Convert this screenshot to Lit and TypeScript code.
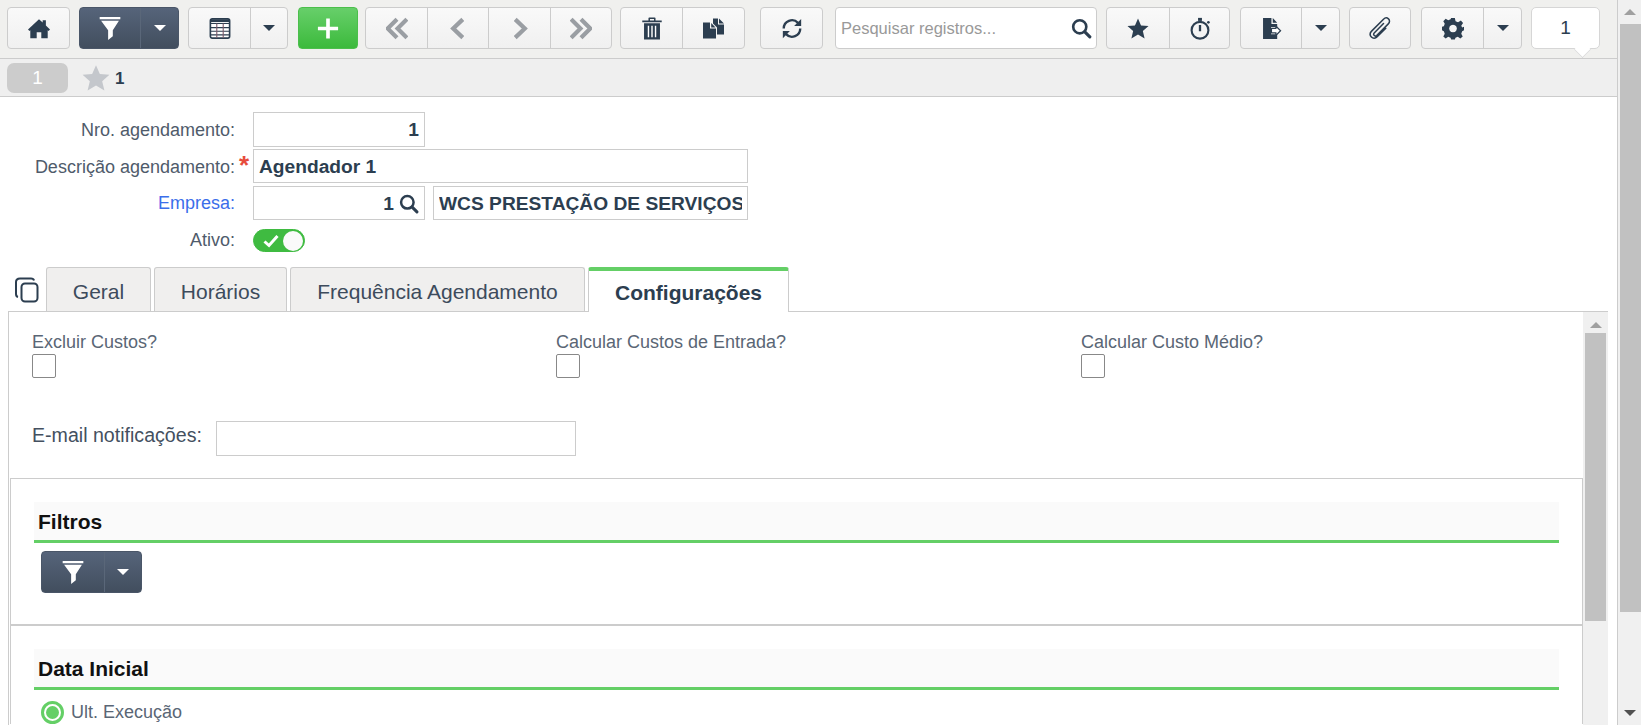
import { LitElement, html, css, svg } from "lit";
import { customElement } from "lit/decorators.js";

const DK = "#2c3e50";
const GR = "#9a9ea3";
const icons: Record<string, any> = {
  home: svg`<svg viewBox="0 0 24 24"><path fill="${DK}" d="M12 2 L16 5.5 V3 H19.5 V8.6 L24 13 L22.4 14.8 L21.5 14 V22.5 H14.5 V16 H9.5 V22.5 H2.5 V14 L1.6 14.8 L0 13 Z"/></svg>`,
  filter: svg`<svg viewBox="1 1 22 24.5"><path fill="#fff" d="M1 1 H23 V3.4 H1 Z M2.5 5 H21.5 L15 15 V21.5 L10 25.5 V15 Z"/></svg>`,
  table: svg`<svg viewBox="0 0 24 24"><rect x="1.5" y="1.5" width="21" height="21" rx="2" fill="#fff" stroke="${DK}" stroke-width="1.8"/><path stroke="${DK}" stroke-width="1.2" fill="none" d="M2 6.5 H22 M2 11 H22 M2 15 H22 M2 19 H22"/><path stroke="#7b5a6a" stroke-width="1.2" fill="none" d="M8.5 6.5 V22 M15.5 6.5 V22"/><rect x="2" y="2" width="20" height="3" fill="${DK}"/></svg>`,
  plus: svg`<svg viewBox="0 0 24 24"><path fill="#fff" d="M10 1 H14 V10 H23 V14 H14 V23 H10 V14 H1 V10 H10 Z"/></svg>`,
  dl: svg`<svg viewBox="2 1.5 20 21"><path fill="none" stroke="${GR}" stroke-width="3.8" d="M12 3.5 L3.5 12 L12 20.5 M21 3.5 L12.5 12 L21 20.5"/></svg>`,
  l: svg`<svg viewBox="4 0 16 24"><path fill="none" stroke="${GR}" stroke-width="4.4" d="M17 2.5 L7 12 L17 21.5"/></svg>`,
  r: svg`<svg viewBox="4 0 16 24"><path fill="none" stroke="${GR}" stroke-width="4.4" d="M7 2.5 L17 12 L7 21.5"/></svg>`,
  dr: svg`<svg viewBox="2 1.5 20 21"><path fill="none" stroke="${GR}" stroke-width="3.8" d="M3 3.5 L11.5 12 L3 20.5 M12 3.5 L20.5 12 L12 20.5"/></svg>`,
  trash: svg`<svg viewBox="0 0 24 26"><path fill="${DK}" d="M8 4 V1.5 Q8 .5 9 .5 H15 Q16 .5 16 1.5 V4 H23 V6 H1 V4 Z M9.7 4 H14.3 V2.2 H9.7 Z M3 7 H21 V25.5 H3 Z"/><path stroke="#fff" stroke-width="1.6" d="M8 10 V23 M12 10 V23 M16 10 V23"/></svg>`,
  copy: svg`<svg viewBox="0 0 22 20"><path fill="${DK}" d="M10 0 H15 V6 H21 V16 H14 V9 L10 5 Z M16 0 L21 5 H16 Z M0 4 H7 V10 H13 V20 H0 Z M8.2 4.5 L12.5 9 H8.2 Z"/></svg>`,
  refresh: svg`<svg viewBox="0 0 24 24"><path fill="none" stroke="${DK}" stroke-width="2.6" d="M3 12 A9 9 0 0 1 18.5 5.8 M21 12 A9 9 0 0 1 5.5 18.2"/><path fill="${DK}" d="M22 1.5 V9.2 H14.3 Z M2 22.5 V14.8 H9.7 Z"/></svg>`,
  search: svg`<svg viewBox="0 0 24 24"><circle cx="10" cy="10" r="7.5" fill="none" stroke="${DK}" stroke-width="3"/><path stroke="${DK}" stroke-width="3.6" stroke-linecap="round" d="M15.8 15.8 L21.5 21.5"/></svg>`,
  star: svg`<svg viewBox="0 0 24 24"><path fill="${DK}" d="M12 1 L15.3 8.6 L23.5 9.3 L17.3 14.7 L19.2 22.8 L12 18.5 L4.8 22.8 L6.7 14.7 L.5 9.3 L8.7 8.6 Z"/></svg>`,
  watch: svg`<svg viewBox="0 0 24 26"><circle cx="12" cy="15" r="9.5" fill="none" stroke="${DK}" stroke-width="2.4"/><rect x="9.8" y="1" width="4.4" height="3.4" fill="${DK}"/><circle cx="21.5" cy="6" r="1.5" fill="${DK}"/><path stroke="${DK}" stroke-width="2.6" d="M12 9 V16"/></svg>`,
  export: svg`<svg viewBox="0 0 24 26"><path fill="${DK}" d="M3 1 H12.5 V8 H19 V11.5 H12 V19.5 H19 V25 H3 Z M14 1 L19 6.5 H14 Z"/><path fill="#fff" stroke="${DK}" stroke-width="1.4" d="M12.5 13 H17.5 V10.2 L22.8 15.5 L17.5 20.8 V18 H12.5 Z"/></svg>`,
  clip: svg`<svg viewBox="1 .5 22 23"><path fill="none" stroke="${DK}" stroke-width="1.5" stroke-linecap="round" d="M15.5 7 L6.2 16.6 C4.6 18.3 7 20.6 8.7 19 L20.3 7.4 C23.8 3.8 18.9 -.8 15.5 2.7 L3.6 14.6 C-.3 18.6 5.1 24.3 9.2 20.3 L17.8 11.7"/></svg>`,
  gear: svg`<svg viewBox="0 0 24 24"><path fill="${DK}" fill-rule="evenodd" d="M10 .5 H14 L14.8 4 L17.5 5.1 L20.6 3.3 L23 6 L21 9 L22 11 L24 10 V14 L22 15 L21 17.6 L22.6 20.6 L20 23 L17.2 21 L14.7 22 L14 24 H10 L9.3 22 L6.8 21 L4 23 L1.4 20.6 L3 17.6 L2 15 L0 14 V10 L2 9.5 L3 6.8 L1.4 4 L4 1.4 L6.8 3 L9.3 2 Z M12 7.8 A4.2 4.2 0 1 0 12.01 7.8 Z"/></svg>`,
};

type Seg = { w: number; icon?: string; caret?: boolean };
type Group = { gap: number; kind?: string; segs: Seg[] };
const groups: Group[] = [
  { gap: 7, segs: [{ w: 63, icon: "home" }] },
  { gap: 9, kind: "dark", segs: [{ w: 61, icon: "filter" }, { w: 39, caret: true }] },
  { gap: 9, segs: [{ w: 62, icon: "table" }, { w: 38, caret: true }] },
  { gap: 10, kind: "green", segs: [{ w: 60, icon: "plus" }] },
  { gap: 7, segs: [{ w: 62, icon: "dl" }, { w: 61, icon: "l" }, { w: 62, icon: "r" }, { w: 62, icon: "dr" }] },
  { gap: 8, segs: [{ w: 62, icon: "trash" }, { w: 63, icon: "copy" }] },
  { gap: 15, segs: [{ w: 63, icon: "refresh" }] },
];
const groups2: Group[] = [
  { gap: 9, segs: [{ w: 63, icon: "star" }, { w: 61, icon: "watch" }] },
  { gap: 10, segs: [{ w: 61, icon: "export" }, { w: 39, caret: true }] },
  { gap: 9, segs: [{ w: 62, icon: "clip" }] },
  { gap: 10, segs: [{ w: 62, icon: "gear" }, { w: 39, caret: true }] },
];

@customElement("app-root")
export class AppRoot extends LitElement {
  static styles = css`
    :host { display: flex; width: 1641px; height: 725px; overflow: hidden; background: #fff;
      font-family: "Liberation Sans", Arial, sans-serif; color: #2c3e50; font-size: 16px; }
    .page { width: 1617px; flex: none; display: flex; flex-direction: column; min-width: 0; }
    .pagebar { width: 24px; flex: none; box-sizing: border-box; border-left: 1px solid #ccc; background: #f0f0f0;
      display: flex; flex-direction: column; align-items: flex-end; position: relative; }
    .arrow-up { width: 0; height: 0; border: 6px solid transparent; border-top: 0; border-bottom: 6px solid #a0a0a0; }
    .arrow-down { width: 0; height: 0; border: 6px solid transparent; border-bottom: 0; border-top: 6px solid #505050; }
    .pagebar .arrow-up { margin: 9px 5px 0 0; }
    .pagebar .thumb { width: 21px; height: 588px; background: #c1c1c1; flex: none; margin-top: 9px; }
    .pagebar .arrow-down { margin: auto 5px 9px 0; }

    .toolbar { height: 58px; flex: none; box-sizing: border-box; background: #f0f0ee; display: flex; align-items: flex-start; padding-top: 7px; }
    .group { display: flex; height: 42px; flex: none; box-sizing: border-box; border: 1px solid #ccc; border-radius: 4px;
      background: linear-gradient(#f9f9f9, #f0f0f0); overflow: hidden; }
    .group.dark { background: linear-gradient(#56647a, #424e5e); border-color: #4a5668; }
    .group.green { background: linear-gradient(#67cf6a, #3cba3c); border-color: #4cbf4c; }
    .seg { box-sizing: border-box; display: flex; align-items: center; justify-content: center; flex: none; }
    .seg + .seg { border-left: 1px solid #ccc; }
    .dark .seg + .seg { border-left-color: #5a6779; }
    .seg svg { display: block; width: 22px; height: 23px; }
    .caret { width: 0; height: 0; border: 6px solid transparent; border-bottom: 0; border-top: 6px solid #2c3e50; }
    .dark .caret { border-top-color: #fff; }
    .search { width: 262px; height: 42px; margin-left: 12px; flex: none; box-sizing: border-box; background: #fff; border: 1px solid #ccc; border-radius: 4px;
      display: flex; align-items: center; justify-content: space-between; padding: 0 4px 0 5px; color: #999; font-size: 16.5px; }
    .search svg { width: 21px; height: 21px; }
    .count { position: relative; width: 69px; height: 42px; margin-left: 9px; flex: none; box-sizing: border-box; background: #fff; border: 1px solid #d6d6d6; border-radius: 5px;
      display: flex; align-items: center; justify-content: center; font-size: 19px; color: #2c3e50; }
    .count::after { content: ""; position: absolute; right: 9px; bottom: -9px; width: 14px; height: 14px; background: #fff; border-right: 1px solid #d6d6d6; border-bottom: 1px solid #d6d6d6; transform: rotate(45deg) scale(.8); }

    .crumb { height: 39px; flex: none; box-sizing: border-box; background: #efefef; border-top: 1px solid #ccc; border-bottom: 1px solid #ccc; display: flex; align-items: center; padding-left: 7px; }
    .pill { width: 61px; height: 30px; border-radius: 7px; background: #ccc; color: #fff; display: flex; align-items: center; justify-content: center; font-size: 19px; }
    .crumb svg { width: 28px; height: 28px; margin-left: 14px; }
    .crumb b { font-size: 17px; margin-left: 5px; padding-top: 2px; color: #2c3e50; }

    .form { display: grid; grid-template-columns: 235px auto; flex: none; margin-top: 15px; row-gap: 2px; }
    .lbl { text-align: right; color: #4f5b6b; font-size: 18px; align-self: center; white-space: nowrap; padding-top: 2px; }
    .lbl.link { color: #3b6eea; }
    .lbl.active { padding-top: 7px; }
    .field { margin-left: 18px; position: relative; display: flex; gap: 8px; }
    .field.emp { margin-top: 1px; }
    .inp { height: 35px; box-sizing: border-box; background: #fff; border: 1px solid #ccc; font-weight: bold; color: #2c3e50; font-size: 19.2px;
      display: flex; align-items: center; padding: 1px 5px 0; white-space: nowrap; overflow: hidden; flex: none; }
    .inp.num { justify-content: flex-end; }
    .w172 { width: 172px; }
    .w495 { width: 495px; height: 34px; }
    .w315 { width: 315px; }
    .field.emp .inp { height: 34px; }
    .inp .clipt { overflow: hidden; }
    .inp svg { width: 20px; height: 20px; margin-left: 5px; }
    .req { position: absolute; left: -14px; top: -1px; color: #e74c3c; font-size: 26px; font-weight: bold; line-height: 34px; }
    .toggle { width: 52px; height: 23px; box-sizing: border-box; border-radius: 12px; background: #3fbb41; border: 1px solid #3fbb41; display: flex; align-items: center; justify-content: flex-end; margin-top: 7px; position: relative; }
    .toggle i { width: 20px; height: 20px; border-radius: 50%; background: #fafafa; display: block; margin-right: 1px; }
    .toggle svg { position: absolute; left: 9px; top: 4px; width: 16px; height: 14px; }

    .tabrow { display: flex; align-items: flex-end; height: 44px; flex: none; margin-top: 15px; padding-left: 15px; }
    .copy { width: 24px; height: 26px; margin: 0 7px 8px 0; flex: none; }
    .tab { height: 44px; box-sizing: border-box; flex: none; border: 1px solid #ccc; border-bottom: 0; border-radius: 3px 3px 0 0; background: #f0efee;
      display: flex; align-items: center; justify-content: center; font-size: 21px; margin-right: 3px; color: #3d4b5c; padding-top: 4px; }
    .tab.on { background: #fff; border-top: 4px solid #64cf66; font-weight: bold; color: #2c3e50; height: 45px; margin-bottom: -1px; position: relative; z-index: 1; padding-top: 2px; }

    .panel { flex: 1; margin-left: 8px; margin-right: 9px; min-height: 0; box-sizing: border-box; border: 1px solid #ccc; border-bottom: 0; display: flex; }
    .content { width: 1574px; flex: none; overflow: hidden; box-sizing: border-box; }
    .vbar { width: 25px; flex: none; background: #f0f0f0; display: flex; flex-direction: column; align-items: center; }
    .vbar .arrow-up { margin-top: 10px; }
    .vbar .thumb { width: 21px; height: 288px; background: #c1c1c1; margin-top: 5px; }

    .checks { display: grid; grid-template-columns: 524px 524px auto; padding: 20px 0 0 23px; }
    .checks label { display: block; font-size: 18px; color: #5a6675; height: 21px; line-height: 20px; }
    .cb { display: block; width: 24px; height: 24px; box-sizing: border-box; border: 1px solid #888; border-radius: 2px; margin-top: 1px; background: #fff; }
    .email { display: flex; align-items: center; padding-left: 23px; margin-top: 43px; }
    .email span { font-size: 19.6px; color: #44505f; width: 184px; flex: none; padding-bottom: 6px; }
    .email .box { width: 360px; height: 35px; box-sizing: border-box; border: 1px solid #ccc; background: #fff; }
    .section { box-sizing: border-box; margin-left: 1px; width: 1573px; border: 1px solid #ccc; border-bottom: 0; margin-top: 22px; padding: 23px 23px 0 23px; height: 146px; }
    .section + .section { margin-top: 0; border-top: 2px solid #ccc; padding-top: 23px; height: auto; }
    .sec-h { height: 41px; box-sizing: border-box; background: #fafafa; border-bottom: 3px solid #64cf66; padding: 1px 0 0 4px; font-weight: bold; font-size: 21px; color: #111; display: flex; align-items: center; }
    .group.fbtn { margin: 8px 0 0 7px; width: 101px; height: 42px; }
    .radio { display: flex; align-items: center; margin: 11px 0 0 7px; font-size: 18px; color: #5a6675; }
    .dot { width: 23px; height: 23px; border-radius: 50%; box-sizing: border-box; border: 3px solid #64cf66; background: #fff; display: flex; align-items: center; justify-content: center; margin-right: 7px; flex: none; }
    .dot i { width: 13px; height: 13px; border-radius: 50%; background: #64cf66; display: block; }
  `;

  private renderGroup(g: Group) {
    const last = g.segs.length - 1;
    return html`<div class="group ${g.kind ?? ""}" style="margin-left:${g.gap}px">
      ${g.segs.map((s, i) => html`<div class="seg" style="width:${s.w - (i === 0 ? 1 : 0) - (i === last ? 1 : 0)}px">${s.caret ? html`<span class="caret"></span>` : icons[s.icon!]}</div>`)}
    </div>`;
  }

  render() {
    return html`
      <div class="page">
        <div class="toolbar">
          ${groups.map(g => this.renderGroup(g))}
          <div class="search"><span>Pesquisar registros...</span>${icons.search}</div>
          ${groups2.map(g => this.renderGroup(g))}
          <div class="count">1</div>
        </div>
        <div class="crumb">
          <div class="pill">1</div>
          <svg viewBox="0 0 24 24"><path fill="#c4c7cc" d="M12 1 L15.3 8.6 L23.5 9.3 L17.3 14.7 L19.2 22.8 L12 18.5 L4.8 22.8 L6.7 14.7 L.5 9.3 L8.7 8.6 Z"/></svg>
          <b>1</b>
        </div>
        <div class="form">
          <div class="lbl">Nro. agendamento:</div>
          <div class="field"><div class="inp num w172">1</div></div>
          <div class="lbl">Descrição agendamento:</div>
          <div class="field"><span class="req">*</span><div class="inp w495">Agendador 1</div></div>
          <div class="lbl link">Empresa:</div>
          <div class="field emp">
            <div class="inp num w172">1${icons.search}</div>
            <div class="inp w315"><span class="clipt">WCS PRESTAÇÃO DE SERVIÇOS</span></div>
          </div>
          <div class="lbl active">Ativo:</div>
          <div class="field"><div class="toggle"><svg viewBox="0 0 16 14"><path fill="none" stroke="#fff" stroke-width="3" d="M1.5 7.5 L6 11.5 L14.5 2"/></svg><i></i></div></div>
        </div>
        <div class="tabrow">
          <svg class="copy" viewBox="0 0 24 26"><rect x="6.5" y="6.5" width="16" height="18" rx="3.5" fill="none" stroke="#2c3e50" stroke-width="2"/><path fill="none" stroke="#2c3e50" stroke-width="2" d="M3 20 Q1 19.5 1 17 V5 Q1 1.5 5 1.5 H16 Q18.5 1.5 19 3.5"/></svg>
          <div class="tab" style="width:105px">Geral</div>
          <div class="tab" style="width:133px">Horários</div>
          <div class="tab" style="width:295px">Frequência Agendamento</div>
          <div class="tab on" style="width:201px">Configurações</div>
        </div>
        <div class="panel">
          <div class="content">
            <div class="checks">
              <div><label>Excluir Custos?</label><span class="cb"></span></div>
              <div><label>Calcular Custos de Entrada?</label><span class="cb"></span></div>
              <div style="margin-left:1px"><label>Calcular Custo Médio?</label><span class="cb"></span></div>
            </div>
            <div class="email"><span>E-mail notificações:</span><div class="box"></div></div>
            <div class="section">
              <div class="sec-h">Filtros</div>
              <div class="group dark fbtn">
                <div class="seg" style="width:62px">${icons.filter}</div>
                <div class="seg" style="width:37px"><span class="caret"></span></div>
              </div>
            </div>
            <div class="section">
              <div class="sec-h">Data Inicial</div>
              <div class="radio"><span class="dot"><i></i></span>Ult. Execução</div>
            </div>
          </div>
          <div class="vbar"><span class="arrow-up"></span><div class="thumb"></div></div>
        </div>
      </div>
      <div class="pagebar"><span class="arrow-up"></span><div class="thumb"></div><span class="arrow-down"></span></div>
    `;
  }
}
